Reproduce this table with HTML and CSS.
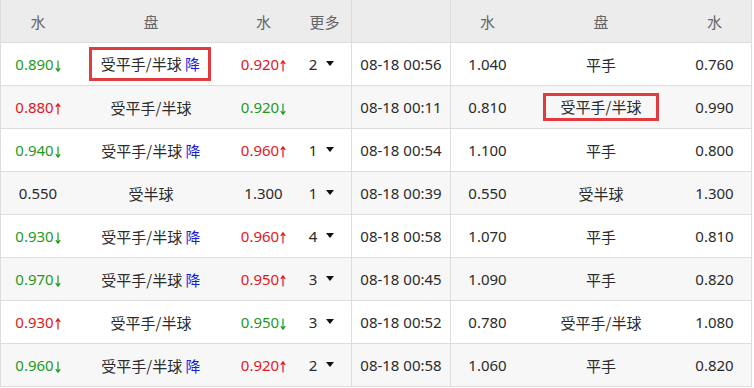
FILE: index.html
```html
<!DOCTYPE html>
<html lang="zh-CN">
<head>
<meta charset="utf-8">
<title>盘口</title>
<link rel="stylesheet" href="styles.css">
</head>
<body>
<div class="grid">
  <div class="row head">
    <div class="c">水</div><div class="c">盘</div><div class="c">水</div><div class="c more-h div">更多</div>
    <div class="c div"></div><div class="c">水</div><div class="c">盘</div><div class="c">水</div>
  </div>

  <div class="row">
    <div class="c"><span class="g">0.890<svg class="ar" viewBox="0 0 6 12"><path d="M3 0.5V11M0.8 8.2L3 11.2L5.2 8.2"/></svg></span></div>
    <div class="c pan"><span class="box1">受平手/半球 <span class="jiang">降</span></span></div>
    <div class="c"><span class="r">0.920<svg class="ar" viewBox="0 0 6 12"><path d="M3 11.5V1M0.8 3.8L3 0.8L5.2 3.8"/></svg></span></div>
    <div class="c more div"><span class="n">2</span><span class="tri"></span></div>
    <div class="c div">08-18 00:56</div>
    <div class="c">1.040</div><div class="c pan">平手</div><div class="c">0.760</div>
  </div>

  <div class="row alt">
    <div class="c"><span class="r">0.880<svg class="ar" viewBox="0 0 6 12"><path d="M3 11.5V1M0.8 3.8L3 0.8L5.2 3.8"/></svg></span></div>
    <div class="c pan">受平手/半球</div>
    <div class="c"><span class="g">0.920<svg class="ar" viewBox="0 0 6 12"><path d="M3 0.5V11M0.8 8.2L3 11.2L5.2 8.2"/></svg></span></div>
    <div class="c more div"></div>
    <div class="c div">08-18 00:11</div>
    <div class="c">0.810</div><div class="c pan"><span class="box2">受平手/半球</span></div><div class="c">0.990</div>
  </div>

  <div class="row">
    <div class="c"><span class="g">0.940<svg class="ar" viewBox="0 0 6 12"><path d="M3 0.5V11M0.8 8.2L3 11.2L5.2 8.2"/></svg></span></div>
    <div class="c pan"><span>受平手/半球 <span class="jiang">降</span></span></div>
    <div class="c"><span class="r">0.960<svg class="ar" viewBox="0 0 6 12"><path d="M3 11.5V1M0.8 3.8L3 0.8L5.2 3.8"/></svg></span></div>
    <div class="c more div"><span class="n">1</span><span class="tri"></span></div>
    <div class="c div">08-18 00:54</div>
    <div class="c">1.100</div><div class="c pan">平手</div><div class="c">0.800</div>
  </div>

  <div class="row alt">
    <div class="c">0.550</div>
    <div class="c pan">受半球</div>
    <div class="c">1.300</div>
    <div class="c more div"><span class="n">1</span><span class="tri"></span></div>
    <div class="c div">08-18 00:39</div>
    <div class="c">0.550</div><div class="c pan">受半球</div><div class="c">1.300</div>
  </div>

  <div class="row">
    <div class="c"><span class="g">0.930<svg class="ar" viewBox="0 0 6 12"><path d="M3 0.5V11M0.8 8.2L3 11.2L5.2 8.2"/></svg></span></div>
    <div class="c pan"><span>受平手/半球 <span class="jiang">降</span></span></div>
    <div class="c"><span class="r">0.960<svg class="ar" viewBox="0 0 6 12"><path d="M3 11.5V1M0.8 3.8L3 0.8L5.2 3.8"/></svg></span></div>
    <div class="c more div"><span class="n">4</span><span class="tri"></span></div>
    <div class="c div">08-18 00:58</div>
    <div class="c">1.070</div><div class="c pan">平手</div><div class="c">0.810</div>
  </div>

  <div class="row alt">
    <div class="c"><span class="g">0.970<svg class="ar" viewBox="0 0 6 12"><path d="M3 0.5V11M0.8 8.2L3 11.2L5.2 8.2"/></svg></span></div>
    <div class="c pan"><span>受平手/半球 <span class="jiang">降</span></span></div>
    <div class="c"><span class="r">0.950<svg class="ar" viewBox="0 0 6 12"><path d="M3 11.5V1M0.8 3.8L3 0.8L5.2 3.8"/></svg></span></div>
    <div class="c more div"><span class="n">3</span><span class="tri"></span></div>
    <div class="c div">08-18 00:45</div>
    <div class="c">1.090</div><div class="c pan">平手</div><div class="c">0.820</div>
  </div>

  <div class="row">
    <div class="c"><span class="r">0.930<svg class="ar" viewBox="0 0 6 12"><path d="M3 11.5V1M0.8 3.8L3 0.8L5.2 3.8"/></svg></span></div>
    <div class="c pan">受平手/半球</div>
    <div class="c"><span class="g">0.950<svg class="ar" viewBox="0 0 6 12"><path d="M3 0.5V11M0.8 8.2L3 11.2L5.2 8.2"/></svg></span></div>
    <div class="c more div"><span class="n">3</span><span class="tri"></span></div>
    <div class="c div">08-18 00:52</div>
    <div class="c">0.780</div><div class="c pan">受平手/半球</div><div class="c">1.080</div>
  </div>

  <div class="row alt">
    <div class="c"><span class="g">0.960<svg class="ar" viewBox="0 0 6 12"><path d="M3 0.5V11M0.8 8.2L3 11.2L5.2 8.2"/></svg></span></div>
    <div class="c pan"><span>受平手/半球 <span class="jiang">降</span></span></div>
    <div class="c"><span class="r">0.920<svg class="ar" viewBox="0 0 6 12"><path d="M3 11.5V1M0.8 3.8L3 0.8L5.2 3.8"/></svg></span></div>
    <div class="c more div"><span class="n">2</span><span class="tri"></span></div>
    <div class="c div">08-18 00:58</div>
    <div class="c">1.060</div><div class="c pan">平手</div><div class="c">0.820</div>
  </div>
</div>
</body>
</html>
```
FILE: styles.css
```css
html, body {
  margin: 0;
  padding: 0;
  background: #ffffff;
}
body {
  font-family: "Noto Sans", "Noto Sans CJK SC", sans-serif;
  font-size: 15px;
  color: #2b2b2b;
}
.grid {
  width: 750px;
  border-left: 1px solid #dddddd;
  border-right: 1px solid #dddddd;
}
.row {
  display: grid;
  grid-template-columns: 74px 152px 73px 52px 99px 73px 154px 73px;
  height: 43px;
  box-sizing: border-box;
  border-bottom: 1px solid #dddddd;
  background: #ffffff;
}
.row.alt {
  background: #f7f7f7;
}
.row.head {
  background: #ececec;
  color: #666666;
  font-family: "Noto Sans CJK SC", sans-serif;
  font-size: 15px;
}
.c {
  display: flex;
  align-items: center;
  justify-content: center;
  white-space: nowrap;
  box-sizing: border-box;
}
.div {
  border-right: 1px solid #dddddd;
}
.head .div {
  border-right-color: #dcdcdc;
}
.pan {
  font-family: "Noto Sans CJK SC", sans-serif;
  font-size: 15px;
}
.g {
  color: #1f9a1f;
}
.r {
  color: #e3171c;
}
.jiang {
  color: #1c1cdc;
}
.ar {
  width: 6px;
  height: 12px;
  margin-left: 1px;
  vertical-align: -2px;
  fill: none;
  stroke: currentColor;
  stroke-width: 1.2;
}
.more {
  padding-right: 8px;
}
.more-h {
  padding-right: 2px;
}
.n {
  font-size: 15px;
}
.tri {
  width: 0;
  height: 0;
  margin-left: 9px;
  margin-top: -2px;
  border-left: 4px solid transparent;
  border-right: 4px solid transparent;
  border-top: 5px solid #111111;
}
.box1 {
  display: inline-block;
  box-sizing: border-box;
  height: 34px;
  line-height: 28px;
  padding: 0 8px 0 9px;
  border: 3px solid #e23b3d;
  margin-left: -2px;
}
.box2 {
  display: inline-block;
  box-sizing: border-box;
  height: 28px;
  line-height: 22px;
  padding: 0 15px 0 15px;
  border: 3px solid #e23b3d;
}
```
